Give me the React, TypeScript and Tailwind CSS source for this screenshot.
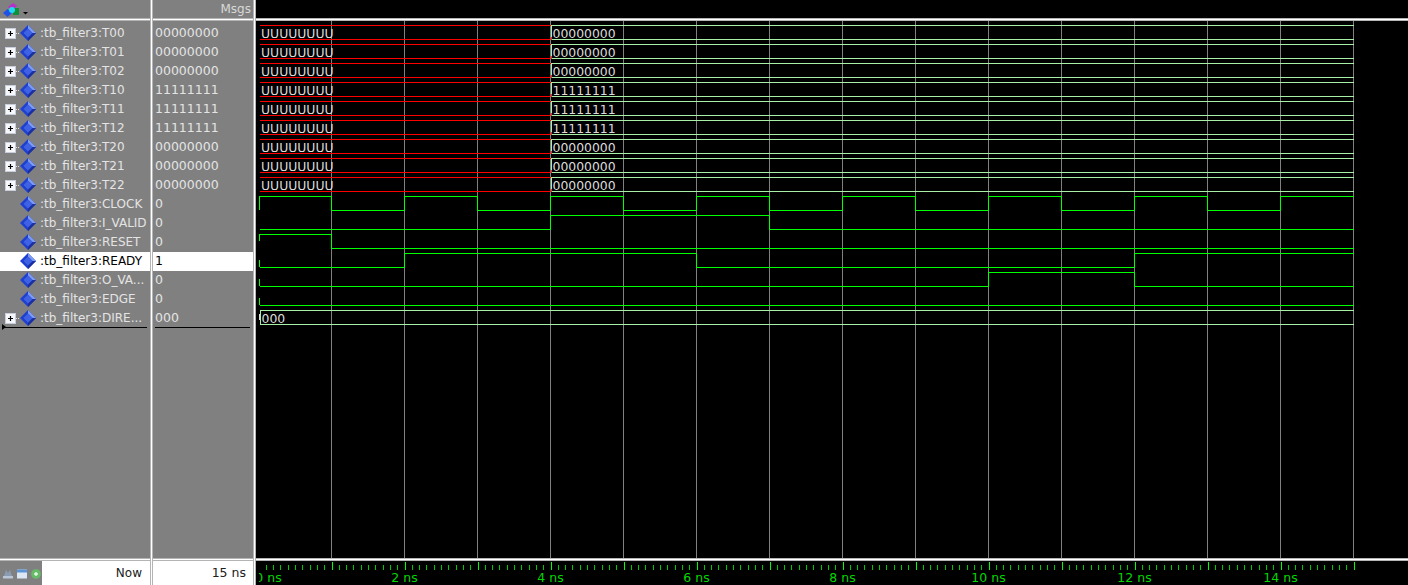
import React from 'react';

const FONT = "font-['DejaVu_Sans',sans-serif]";

interface Row {
  name: string;
  value: string;
  expand?: boolean;
  selected?: boolean;
}

const rows: Row[] = [
  { name: ':tb_filter3:T00', value: '00000000', expand: true },
  { name: ':tb_filter3:T01', value: '00000000', expand: true },
  { name: ':tb_filter3:T02', value: '00000000', expand: true },
  { name: ':tb_filter3:T10', value: '11111111', expand: true },
  { name: ':tb_filter3:T11', value: '11111111', expand: true },
  { name: ':tb_filter3:T12', value: '11111111', expand: true },
  { name: ':tb_filter3:T20', value: '00000000', expand: true },
  { name: ':tb_filter3:T21', value: '00000000', expand: true },
  { name: ':tb_filter3:T22', value: '00000000', expand: true },
  { name: ':tb_filter3:CLOCK', value: '0' },
  { name: ':tb_filter3:I_VALID', value: '0' },
  { name: ':tb_filter3:RESET', value: '0' },
  { name: ':tb_filter3:READY', value: '1', selected: true },
  { name: ':tb_filter3:O_VA...', value: '0' },
  { name: ':tb_filter3:EDGE', value: '0' },
  { name: ':tb_filter3:DIRE...', value: '000', expand: true },
];

const X0 = 258.5;
const NS = 73;
const tx = (t: number) => X0 + t * NS;
const GREEN = '#00ff00';
const BUS = '#a8f0a8';
const RED = '#ff0000';
const WAVE_FONT = "'DejaVu Sans', sans-serif";

// waveform coords are relative to the wave pane, which starts at x=256, y=21
const wx = (x: number) => x - 256;
const wy = (y: number) => y - 21;

// edges: times at which the level toggles, start level given
function digitalPath(high: number, start: boolean, edges: number[]) {
  const low = high + 14;
  let level = start;
  let d = `M${wx(tx(0) + 1)} ${wy((level ? high : low) + 0.5)}`;
  for (const t of [...edges, 15]) {
    d += ` L${wx(tx(t))} ${wy((level ? high : low) + 0.5)}`;
    if (t !== 15) {
      level = !level;
      d += ` L${wx(tx(t))} ${wy((level ? high : low) + 0.5)}`;
    }
  }
  return d;
}

const digitals = [
  { high: 196, start: true, edges: [1, 2, 3, 4, 5, 6, 7, 8, 9, 10, 11, 12, 13, 14], tick: [196, 210] },
  { high: 215, start: false, edges: [4, 7], tick: null },
  { high: 234, start: true, edges: [1], tick: [234, 241] },
  { high: 253, start: false, edges: [2, 6, 12], tick: [260, 267] },
  { high: 272, start: false, edges: [10, 12], tick: [279, 286] },
  { high: 291, start: false, edges: [], tick: [298, 305] },
];

const PlusBox = () => (
  <svg width="15" height="11" viewBox="0 0 15 11" className="shrink-0">
    <rect x="0.5" y="0.5" width="10" height="10" fill="#f6f8fc" stroke="#c8cedc" />
    <path d="M3 5.5H8M5.5 3V8" stroke="#000" strokeWidth="1.2" />
    <path d="M11 5.5H15" stroke="#e0e0e0" strokeDasharray="1 1" />
  </svg>
);

const Diamond = () => (
  <svg width="16" height="16" viewBox="0 0 16 16" className="-mt-[2px] shrink-0">
    <path d="M8 0L16 8L8 16L0 8Z" fill="#1f3fd0" />
    <path d="M8 0L16 8L12.5 8L8 3.5Z" fill="#7f9cf0" />
    <path d="M16 8L8 16L8 12.5L12.5 8Z" fill="#1c2f9c" />
    <path d="M8 3.5L12.5 8L8 12.5L3.5 8Z" fill="#3f62e4" />
  </svg>
);

const VSplit = () => <div className="w-[3px] shrink-0 border-x border-[#b4b4b4] bg-white" />;
const HSplit = () => <div className="h-[3px] shrink-0 border-y border-[#b4b4b4] bg-white" />;

const WaveView = () => (
  <svg width="1152" height="537" viewBox="0 0 1152 537" className="block" shapeRendering="crispEdges">
    {Array.from({ length: 15 }, (_, i) => (
      <line key={i} x1={wx(tx(i + 1))} x2={wx(tx(i + 1))} y1="0" y2="537" stroke="#808080" />
    ))}
    {Array.from({ length: 9 }, (_, i) => {
      const top = wy(25 + i * 19) + 0.5;
      const bot = top + 14;
      const value = i >= 3 && i <= 5 ? '11111111' : '00000000';
      return (
        <g key={i}>
          <path d={`M${wx(tx(4))} ${top}H${wx(tx(15))}M${wx(tx(4))} ${bot}H${wx(tx(15))}`} stroke={BUS} fill="none" />
          <path d={`M${wx(tx(0) + 1)} ${top}H${wx(tx(4))}M${wx(tx(0) + 1)} ${bot}H${wx(tx(4))}`} stroke={RED} fill="none" />
          <path d={`M${wx(tx(4)) + 1} ${top}V${bot}`} stroke={BUS} fill="none" />
          <rect x={wx(tx(4)) - 1} y={bot - 3} width="2" height="3" fill="#c04040" />
          <text x="5" y={top + 12.5} fontSize="12.4" fill="#dcdcdc" fontFamily={WAVE_FONT}>UUUUUUUU</text>
          <text x={wx(tx(4)) + 2} y={top + 12.5} fontSize="12.4" fill="#dcdcdc" fontFamily={WAVE_FONT}>{value}</text>
        </g>
      );
    })}
    {digitals.map((s, i) => (
      <g key={i}>
        <path d={digitalPath(s.high, s.start, s.edges)} stroke={GREEN} fill="none" />
        {s.tick && <path d={`M${wx(259) + 0.5} ${wy(s.tick[0])}V${wy(s.tick[1])}`} stroke={GREEN} />}
      </g>
    ))}
    <path d={`M${wx(260)} ${wy(310) + 0.5}H${wx(tx(15))}M${wx(260)} ${wy(324) + 0.5}H${wx(tx(15))}M${wx(260) + 0.5} ${wy(310)}V${wy(324)}`} stroke={BUS} fill="none" />
    <path d={`M${wx(259) + 0.5} ${wy(314)}V${wy(320)}`} stroke="#e0e0e0" />
    <text x="5.5" y={wy(323)} fontSize="12.4" fill="#dcdcdc" fontFamily={WAVE_FONT}>000</text>
  </svg>
);

const Ruler = () => {
  const ticks = [];
  for (let i = 1; i <= 150; i++) {
    const major = i % 10 === 0;
    const x = Math.round(wx(X0) + (i * NS) / 10) + 0.5;
    ticks.push(<line key={i} x1={x} x2={x} y1={major ? 1 : 4} y2="9" stroke={major ? '#00ff00' : '#00c800'} />);
  }
  return (
    <div className="relative h-6 overflow-hidden">
      <svg width="1152" height="24" className="block" shapeRendering="crispEdges">
        {ticks}
      </svg>
      {[0, 2, 4, 6, 8, 10, 12, 14].map((n) => (
        <span
          key={n}
          className="absolute top-[10px] -translate-x-1/2 text-[12.5px] leading-[14px] whitespace-nowrap text-[#00d800]"
          style={{ left: wx(tx(n)) + (n === 0 ? 10 : 0) }}
        >
          {n} ns
        </span>
      ))}
      {/* the first label is cut off by the pane's inner margin */}
      <div className="absolute left-0 top-0 h-full w-[3px] bg-black" />
    </div>
  );
};

export default function App() {
  return (
    <div className={`${FONT} flex h-[585px] w-[1408px] overflow-hidden bg-[#808080] text-[12px] text-[#e4e4e4]`}>
      {/* names column */}
      <div className="flex w-[150px] shrink-0 flex-col bg-[#808080]">
        <div className="flex h-[18px] items-start">
          <svg width="30" height="18" viewBox="0 0 30 18">
            <path d="M8 7L13 3L17 6L12 11Z" fill="#b830c8" />
            <rect x="13" y="8" width="6" height="7" fill="#109038" />
            <path d="M3 13L7.5 9L12 13L7.5 17Z" fill="#1f50e8" />
            <circle cx="12" cy="10" r="3" fill="#20d8f0" />
            <path d="M23 12H28L25.5 14.5Z" fill="#000" />
          </svg>
        </div>
        <HSplit />
        <div className="flex-1 pt-[3px]">
          {rows.map((r) => (
            <div key={r.name} className={`flex h-[19px] items-center ${r.selected ? 'bg-white text-black' : ''}`}>
              <div className="w-[20px] shrink-0 pl-[5px]">{r.expand && <PlusBox />}</div>
              <Diamond />
              <span className="ml-[4px] -mt-[2px] whitespace-nowrap">{r.name}</span>
            </div>
          ))}
          <div className="relative -mt-[1px] ml-[2px] mr-[3px] h-px bg-black">
            <span className="absolute -top-[3px] left-0 h-0 w-0 border-y-[3px] border-l-[4px] border-y-transparent border-l-black" />
          </div>
        </div>
        <HSplit />
        <div className="flex h-6 items-center bg-white">
          <div className="flex h-full w-[42px] items-center gap-[4px] bg-[#808080] pl-[3px] pt-[2px]">
            <svg width="10" height="10" viewBox="0 0 10 10">
              <path d="M1 7L3 1L5 4L7 1L9 7Z" fill="#8a9cb2" />
              <rect x="0" y="7" width="10" height="2.5" fill="#b8c6d8" />
            </svg>
            <svg width="10" height="10" viewBox="0 0 10 10">
              <rect x="0" y="0.5" width="10" height="9" fill="#dce6f4" />
              <rect x="0" y="0.5" width="10" height="3" fill="#5c94d8" />
            </svg>
            <svg width="10" height="10" viewBox="0 0 10 10">
              <circle cx="5" cy="5" r="4.8" fill="#66bc66" />
              <path d="M3 5H7M5 3V7" stroke="#e8f8e8" strokeWidth="1.4" />
            </svg>
          </div>
          <span className="flex-1 pr-[8px] text-right text-[#202020]">Now</span>
        </div>
      </div>
      <VSplit />
      {/* values column */}
      <div className="flex w-[100px] shrink-0 flex-col bg-[#808080] text-[12.5px]">
        <div className="flex h-[18px] items-center justify-end pr-[2px] text-[12px] text-[#d8d8d8]">Msgs</div>
        <HSplit />
        <div className="flex-1 pt-[3px]">
          {rows.map((r) => (
            <div key={r.name} className={`flex h-[19px] items-center pl-[2px] ${r.selected ? 'bg-white text-black' : ''}`}>
              {r.value}
            </div>
          ))}
          <div className="-mt-[1px] ml-[2px] mr-[3px] h-px bg-black" />
        </div>
        <HSplit />
        <div className="flex h-6 items-center justify-end bg-white pr-[7px] text-[#202020]">15 ns</div>
      </div>
      <VSplit />
      {/* wave pane */}
      <div className="flex flex-1 flex-col bg-black">
        <div className="h-[18px]" />
        <HSplit />
        <div className="flex-1 overflow-hidden">
          <WaveView />
        </div>
        <HSplit />
        <Ruler />
      </div>
    </div>
  );
}
